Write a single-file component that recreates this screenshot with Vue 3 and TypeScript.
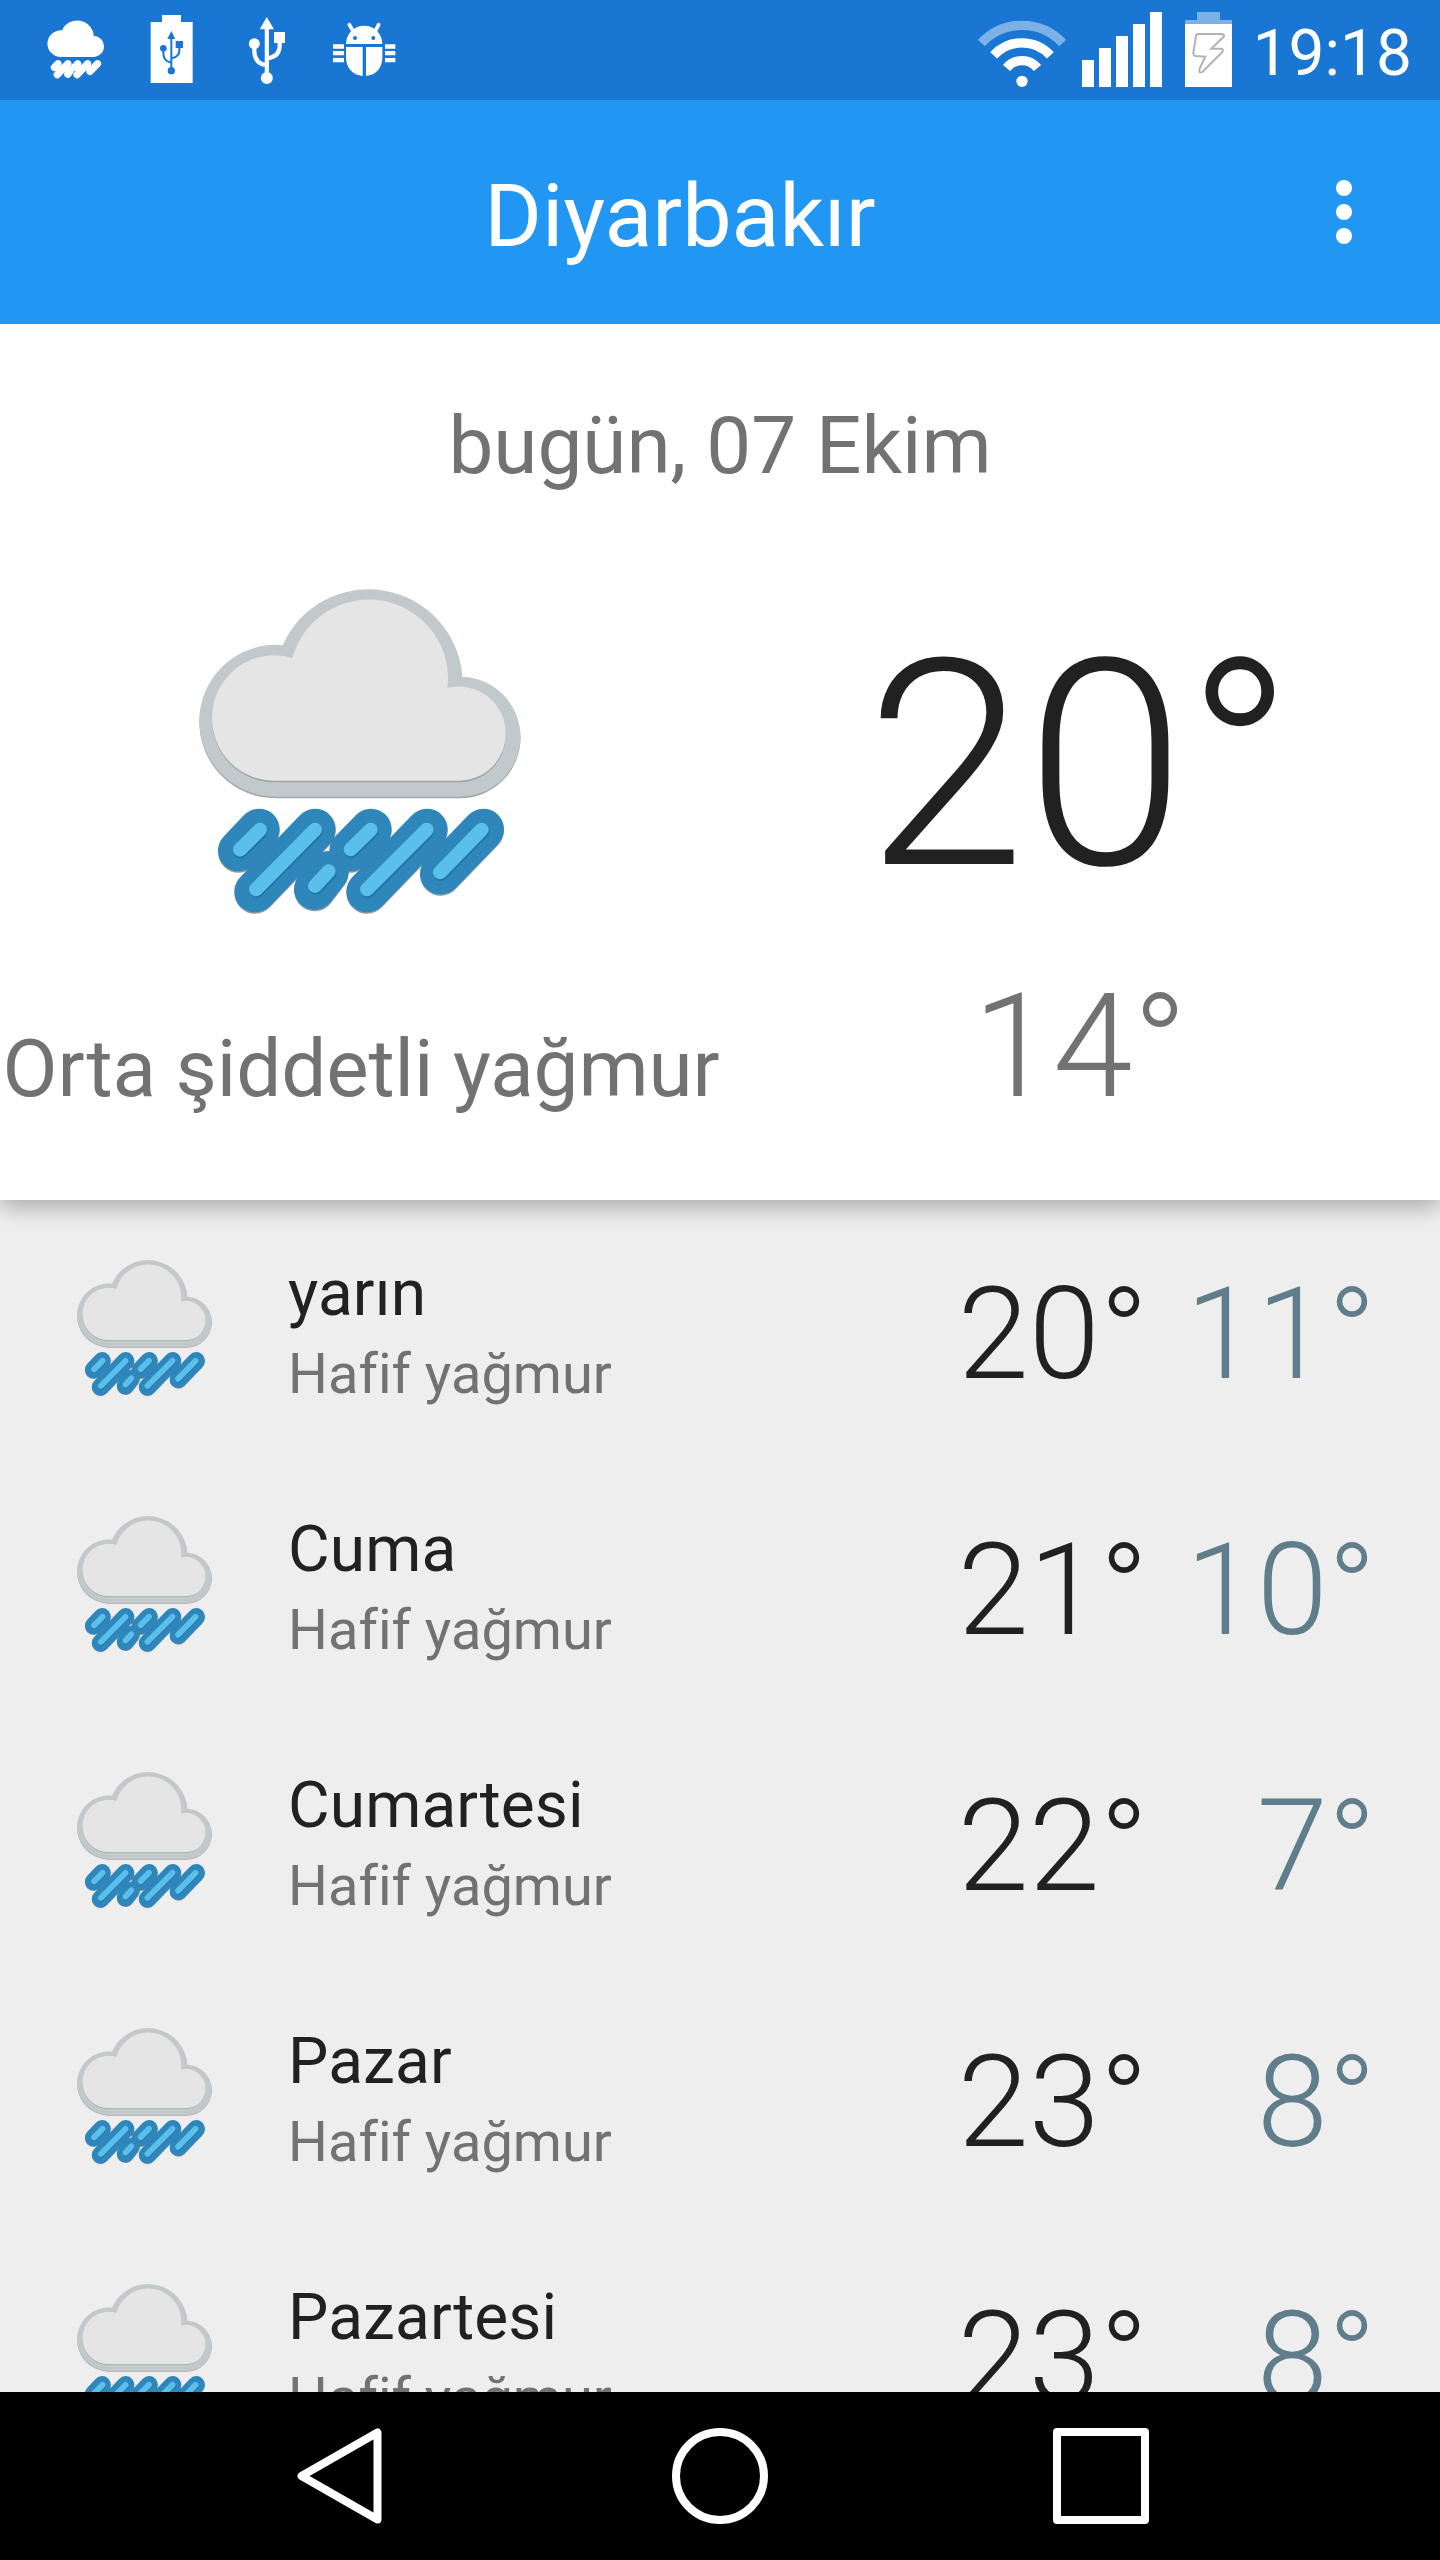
<script setup lang="ts">
interface ForecastDay {
  name: string
  summary: string
  high: number
  low: number
}

const city = 'Diyarbakır'
const today = { date: 'bugün, 07 Ekim', summary: 'Orta şiddetli yağmur', high: 20, low: 14 }

const days: ForecastDay[] = [
  { name: 'yarın', summary: 'Hafif yağmur', high: 20, low: 11 },
  { name: 'Cuma', summary: 'Hafif yağmur', high: 21, low: 10 },
  { name: 'Cumartesi', summary: 'Hafif yağmur', high: 22, low: 7 },
  { name: 'Pazar', summary: 'Hafif yağmur', high: 23, low: 8 },
  { name: 'Pazartesi', summary: 'Hafif yağmur', high: 23, low: 8 },
]
</script>

<template>
  <div class="screen">
    <!-- shared weather artwork -->
    <svg class="defs" width="0" height="0" aria-hidden="true">
      <defs>
        <path id="cloud-outer" d="M287 680A229 229 0 0 1 58 451A229 229 0 0 1 308 225.500A282 282 0 0 1 847 320A181.500 181.500 0 0 1 1021.500 498.500A181.500 181.500 0 0 1 840 680Z" />
        <path id="cloud-inner" d="M283 632A187 187 0 0 1 96 445A187 187 0 0 1 337 264A238 238 0 0 1 803 354A140 140 0 0 1 977 492A140 140 0 0 1 837 632Z" />
        <path id="rain-outer" d="M237 778L176 842M405 778L225 965M573 778L510 842M444 905L404 957M741 778L561 965M910 778L782 911" />
        <path id="rain-inner" d="M240 779L180 839M405 779L228 958M572 779L512 838M446 904L405 948M740 779L561 958M905 779L780 907" />
        <symbol id="rain-cloud" viewBox="0 0 1080 1080">
          <use href="#cloud-outer" y="5" fill="#a4a7a8" />
          <use href="#cloud-outer" fill="#c2c9cd" />
          <use href="#cloud-inner" y="5" fill="#a0a6a6" />
          <use href="#cloud-inner" fill="#e5e5e5" />
          <g fill="none" stroke-linecap="round">
            <use href="#rain-outer" y="5" stroke="#8d9ba4" stroke-width="123" />
            <use href="#rain-outer" stroke="#2e86bb" stroke-width="124" />
            <use href="#rain-inner" x="2" y="5" stroke="#2274a6" stroke-width="43" />
            <use href="#rain-inner" stroke="#5abfea" stroke-width="42" />
          </g>
        </symbol>
      </defs>
    </svg>

    <header class="status">
      <div class="status-left">
        <svg class="st-cloud" viewBox="0 0 1080 1080">
          <use href="#cloud-outer" fill="#fff" />
          <use href="#rain-outer" y="16" fill="none" stroke="#fff" stroke-width="122" stroke-linecap="round" />
        </svg>
        <svg class="st-battery" viewBox="450 0 132 300">
          <path d="M452 66H486V45H543V66H578V249H452Z" fill="#fff" />
          <g fill="#1976d2">
            <path d="M514 93L526 117H502Z" />
            <circle cx="514" cy="212" r="11" />
            <circle cx="490" cy="145" r="10" />
            <path d="M527 123H549V144H527Z" />
          </g>
          <path d="M514 112V208M490 145V160Q490 184 514 188M538 140V152Q538 170 514 175" fill="none" stroke="#1976d2" stroke-width="6" />
        </svg>
        <svg class="st-usb" viewBox="744 0 114 300">
          <g fill="#fff">
            <path d="M800.500 51L822 88H779Z" />
            <circle cx="800.500" cy="234" r="18" />
            <circle cx="763" cy="131" r="16.500" />
            <path d="M822 96H855V129H822Z" />
          </g>
          <path d="M800.500 80V230M763 135V155Q765 192 800 195M839 125V140Q837 172 800 175" fill="none" stroke="#fff" stroke-width="12.500" />
        </svg>
        <svg class="st-bug" viewBox="996 0 192 300">
          <g fill="#fff">
            <path d="M1038 132A54.500 55 0 0 1 1147 132Z" />
            <path d="M1038 141H1088V228C1058 226 1038 204 1038 172Z" />
            <path d="M1098 141H1147V172C1147 204 1128 226 1098 228Z" />
            <path d="M999 133h33v13h-33zM999 153h33v13h-33zM999 174h33v13h-33zM1155 133h31v13h-31zM1155 153h31v13h-31zM1155 174h31v13h-31z" />
          </g>
          <path d="M1048 74L1060 95M1136 74L1125 95" stroke="#fff" stroke-width="11" stroke-linecap="round" />
          <circle cx="1065" cy="114" r="6" fill="#1976d2" />
          <circle cx="1120" cy="114" r="6" fill="#1976d2" />
        </svg>
      </div>
      <div class="status-right">
        <svg class="st-wifi" viewBox="51 0 270 300">
          <g fill="none" stroke="#fff" stroke-width="28">
            <path d="M64 129A167 167 0 0 1 308 129" opacity="0.43" />
            <path d="M101 166A115 115 0 0 1 271 166" />
            <path d="M139.500 204A60 60 0 0 1 232.500 204" />
          </g>
          <circle cx="186" cy="244" r="17" fill="#fff" />
        </svg>
        <svg class="st-signal" viewBox="366 0 240 300">
          <path d="M366 180h36v81h-36zM417 144h36v117h-36zM468 108h36v153h-36zM519 72h36v189h-36zM570 36h36v225h-36z" fill="#fff" />
        </svg>
        <svg class="st-charge" viewBox="675 0 141 300">
          <path d="M675 72V60H711V36H780V60H816V72Z" fill="#fff" opacity="0.43" />
          <path d="M675 72H816V261H675Z" fill="#fff" />
          <path d="M716 102L786 102Q796 104 790 111L754 146L784 146Q792 148 787 156L727 216Q717 222 718 208L736 170L706 168Q699 166 700 158L708 108Q709 102 716 102Z" fill="none" stroke="#b3b3b3" stroke-width="6" />
        </svg>
        <span class="clock">19:18</span>
      </div>
    </header>

    <div class="toolbar">
      <h1>{{ city }}</h1>
      <svg class="menu" viewBox="0 0 96 96">
        <g fill="#fff">
          <circle cx="48" cy="24" r="8" />
          <circle cx="48" cy="48" r="8" />
          <circle cx="48" cy="72" r="8" />
        </g>
      </svg>
    </div>

    <section class="today">
      <p class="date">{{ today.date }}</p>
      <div class="today-grid">
        <div class="today-col">
          <svg class="today-icon"><use href="#rain-cloud" /></svg>
          <p class="today-summary">{{ today.summary }}</p>
        </div>
        <div class="today-col">
          <p class="today-high">{{ today.high }}°</p>
          <p class="today-low">{{ today.low }}°</p>
        </div>
      </div>
    </section>

    <ul class="list">
      <li v-for="day in days" :key="day.name" class="row">
        <svg class="row-icon"><use href="#rain-cloud" /></svg>
        <div class="row-text">
          <p class="row-name">{{ day.name }}</p>
          <p class="row-summary">{{ day.summary }}</p>
        </div>
        <span class="temp">{{ day.high }}°</span>
        <span class="temp low">{{ day.low }}°</span>
      </li>
    </ul>

    <nav class="nav">
      <svg viewBox="0 0 96 96"><path d="M86.500 4.500V91.500L10.500 48Z" /></svg>
      <svg viewBox="0 0 96 96"><circle cx="48" cy="48" r="44" /></svg>
      <svg viewBox="0 0 96 96"><rect x="4" y="4" width="88" height="88" /></svg>
    </nav>
  </div>
</template>

<style>
body {
  margin: 0;
}
</style>

<style scoped>
.screen {
  display: flex;
  flex-direction: column;
  width: 1440px;
  height: 2560px;
  overflow: hidden;
  background: #eeeeee;
  font-family: Roboto, 'Noto Sans', sans-serif;
  font-variant-ligatures: none;
  color: #212121;
}

.screen p,
.screen h1,
.screen ul {
  margin: 0;
  padding: 0;
  font-weight: 400;
  white-space: nowrap;
}

.defs {
  position: absolute;
}

svg {
  display: block;
  flex: none;
}

.status {
  display: flex;
  justify-content: space-between;
  flex: none;
  height: 100px;
  background: #1976d2;
}

.status-left,
.status-right {
  display: flex;
}

.status-left {
  padding-left: 44.3px;
}

.st-cloud {
  width: 63.5px;
  height: 63.5px;
  margin-top: 17.2px;
}

.st-battery {
  width: 44px;
  height: 100px;
  margin-left: 42.2px;
}

.st-usb {
  width: 38px;
  height: 100px;
  margin-left: 54px;
}

.st-bug {
  width: 64px;
  height: 100px;
  margin-left: 46px;
}

.status-right {
  padding-right: 28px;
}

.st-wifi {
  width: 90px;
  height: 100px;
}

.st-signal {
  width: 80px;
  height: 100px;
  margin-left: 15px;
}

.st-charge {
  width: 47px;
  height: 100px;
  margin-left: 23px;
}

.clock {
  width: 180px;
  text-align: right;
  font-size: 64px;
  line-height: 107px;
  color: #fff;
}

.toolbar {
  position: relative;
  z-index: 1;
  display: flex;
  align-items: center;
  flex: none;
  box-sizing: border-box;
  height: 224px;
  padding: 0 48px 0 64px;
  background: #2196f3;
}

.screen .toolbar h1 {
  flex: 1;
  padding-top: 8px;
  font-size: 88px;
  line-height: 104px;
  text-align: center;
  color: #fff;
}

.menu {
  width: 96px;
  height: 96px;
}

.today {
  flex: none;
  height: 876px;
  background: #fff;
  box-shadow: 0 8px 20px rgba(0, 0, 0, 0.27);
}

.screen .date {
  padding-top: 74px;
  font-size: 80px;
  line-height: 96px;
  text-align: center;
  color: #727272;
}

.today-grid {
  display: grid;
  grid-template-columns: 720px 720px;
}

.today-col {
  display: flex;
  flex-direction: column;
  align-items: center;
}

.today-icon {
  width: 360px;
  height: 360px;
  margin-top: 76px;
}

.screen .today-summary {
  margin-top: 91px;
  padding-left: 2px;
  font-size: 80px;
  letter-spacing: -0.1px;
  line-height: 96px;
  color: #727272;
}

.screen .today-high {
  margin-top: 102px;
  font-size: 288px;
  font-weight: 300;
  line-height: 340px;
}

.screen .today-low {
  margin-top: 27px;
  font-size: 144px;
  font-weight: 300;
  line-height: 168px;
  color: #727272;
}

.list {
  flex: 1;
  min-height: 0;
  overflow: hidden;
  list-style: none;
}

.row {
  display: flex;
  height: 256px;
  padding: 0 64px 0 68.5px;
}

.row-icon {
  width: 151px;
  height: 151px;
  margin-top: 52px;
}

.row-text {
  flex: 1;
  margin-left: 68.5px;
  padding-top: 56px;
}

.row-name {
  font-size: 64px;
  letter-spacing: 0.12px;
  line-height: 76px;
}

.screen .row-summary {
  margin-top: 9px;
  font-size: 56px;
  line-height: 66px;
  color: #727272;
}

.temp {
  width: 228px;
  margin-top: 59px;
  font-size: 128px;
  font-weight: 300;
  line-height: 150px;
  text-align: right;
}

.low {
  color: #607d8b;
}

.nav {
  display: flex;
  justify-content: center;
  align-items: center;
  gap: 285px;
  flex: none;
  height: 168px;
  background: #000;
}

.nav svg {
  width: 96px;
  height: 96px;
  fill: none;
  stroke: #fff;
  stroke-width: 8;
  stroke-linejoin: round;
}
</style>
